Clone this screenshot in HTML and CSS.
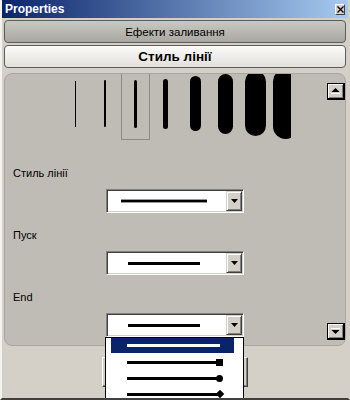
FILE: index.html
```html
<!DOCTYPE html>
<html>
<head>
<meta charset="utf-8">
<link rel="stylesheet" href="styles.css">
</head>
<body>
<div class="window">
  <div class="titlebar">
    <span class="title">Properties</span>
    <span class="close"><svg width="7" height="7" viewBox="0 0 7 7"><path d="M0.5 0.5 L6.5 6.5 M6.5 0.5 L0.5 6.5" stroke="#000" stroke-width="1.3"/></svg></span>
  </div>
  <div class="tabs">
    <div class="tab tab-fill">Ефекти заливання</div>
    <div class="tab tab-active">Стиль лінії</div>
  </div>
  <div class="panel">
    <div class="panel-main">
      <div class="strip">
        <div class="cell"><div class="bar w1"></div></div>
        <div class="cell"><div class="bar w2"></div></div>
        <div class="cell selected"><div class="bar w3"></div></div>
        <div class="cell"><div class="bar w5"></div></div>
        <div class="cell"><div class="bar w10"></div></div>
        <div class="cell"><div class="bar w15"></div></div>
        <div class="cell"><div class="bar w20"></div></div>
        <div class="cell"><div class="bar w25"></div></div>
      </div>
      <div class="field">
        <div class="label">Стиль лінії</div>
        <div class="combo">
          <div class="combo-value"><span class="line line-long"></span></div>
          <div class="combo-btn"><svg width="7" height="4" viewBox="0 0 7 4"><path d="M0 0 H7 L3.5 4 Z" fill="#000"/></svg></div>
        </div>
      </div>
      <div class="field">
        <div class="label">Пуск</div>
        <div class="combo">
          <div class="combo-value"><span class="line line-short"></span></div>
          <div class="combo-btn"><svg width="7" height="4" viewBox="0 0 7 4"><path d="M0 0 H7 L3.5 4 Z" fill="#000"/></svg></div>
        </div>
      </div>
      <div class="field">
        <div class="label">End</div>
        <div class="combo">
          <div class="combo-value"><span class="line line-short"></span></div>
          <div class="combo-btn"><svg width="7" height="4" viewBox="0 0 7 4"><path d="M0 0 H7 L3.5 4 Z" fill="#000"/></svg></div>
        </div>
      </div>
    </div>
    <div class="scroll-col">
      <div class="sbtn"><svg width="9" height="6" viewBox="0 0 9 6"><path d="M0.5 4 H8.5 L4.5 0 Z" fill="#000"/><path d="M0 5.5 H9" stroke="#fff"/></svg></div>
      <div class="sbtn"><svg width="9" height="6" viewBox="0 0 9 6"><path d="M0 0.5 H9" stroke="#fff"/><path d="M0.5 2 H8.5 L4.5 6 Z" fill="#000"/></svg></div>
    </div>
  </div>
  <div class="footer">
    <div class="footer-btn"></div>
  </div>
  <div class="dropdown">
    <div class="item active"><span class="dline"></span></div>
    <div class="item"><span class="dline"></span><span class="end square"></span></div>
    <div class="item"><span class="dline"></span><span class="end circle"></span></div>
    <div class="item"><span class="dline"></span><span class="end diamond"></span></div>
  </div>
</div>
</body>
</html>
```

FILE: styles.css
```css
* { box-sizing: border-box; }
html, body { margin: 0; padding: 0; }
body { background: #d4d0c8; font-family: "Liberation Sans", Arial, sans-serif; }

.window {
  position: relative;
  width: 350px;
  height: 400px;
  background: #d4d0c8;
  border-left: 2px solid #f4f3ef;
  border-right: 2px solid #d4d0c8;
  border-bottom: 2px solid #404040;
  overflow: hidden;
  display: flex;
  flex-direction: column;
}

.titlebar {
  height: 18px;
  background: linear-gradient(to right, #0a246a, #a6caf0);
  display: flex;
  align-items: center;
  justify-content: space-between;
  padding: 0 3px 0 3px;
  flex-shrink: 0;
}
.title {
  color: #fff;
  font-weight: bold;
  font-size: 12px;
}
.close {
  width: 10px;
  height: 11px;
  background: #d4d0c8;
  border-top: 1px solid #fff;
  border-left: 1px solid #fff;
  border-right: 1px solid #404040;
  border-bottom: 1px solid #404040;
  display: flex;
  align-items: center;
  justify-content: center;
  margin-top: 1px;
}

.tabs {
  padding: 2px 2px 0;
  display: flex;
  flex-direction: column;
  gap: 2px;
  flex-shrink: 0;
}
.tab {
  height: 23px;
  border: 1px solid #5c5c5c;
  border-radius: 4px;
  display: flex;
  align-items: center;
  justify-content: center;
  color: #000;
}
.tab-fill {
  background: linear-gradient(to bottom, #cac8c2, #a9a7a1);
  font-size: 11.5px;
}
.tab-active {
  background: linear-gradient(to bottom, #fbfbfa, #e2e0da);
  font-size: 13.5px;
  font-weight: bold;
}

.panel {
  margin: 5px 2px 0;
  height: 273px;
  background: #bfbcb5;
  border: 1px solid #a9a69f;
  border-radius: 8px;
  display: flex;
  flex-shrink: 0;
}
.panel-main {
  flex: 1;
  display: flex;
  flex-direction: column;
}

.strip {
  margin-left: 55px;
  margin-bottom: 27px;
  width: 231px;
  height: 66px;
  display: flex;
  align-items: flex-end;
  overflow: hidden;
  flex-shrink: 0;
}
.cell {
  width: 30px;
  height: 73px;
  flex-shrink: 0;
  display: flex;
  align-items: center;
  justify-content: center;
}
.cell.selected {
  border: 1px solid #8c8a85;
  width: 29px;
  margin-left: 1px;
}
.bar { background: #000; flex-shrink: 0; }
.w1 { width: 1px; height: 46px; }
.w2 { width: 2px; height: 47px; border-radius: 1px; }
.w3 { width: 3px; height: 48px; border-radius: 1.5px; }
.w5 { width: 5px; height: 50px; border-radius: 2.5px; }
.w10 { width: 11px; height: 55px; border-radius: 5.5px; }
.w15 { width: 15px; height: 60px; border-radius: 7.5px; }
.w20 { width: 21px; height: 65px; border-radius: 10.5px; }
.w25 { width: 25px; height: 70px; border-radius: 12.5px; }

.field {
  padding-left: 8px;
  display: flex;
  flex-direction: column;
}
.field + .field { margin-top: 16px; }
.label {
  font-size: 11px;
  line-height: 13px;
  height: 13px;
  color: #000;
}
.combo {
  margin-top: 9px;
  margin-left: 93px;
  width: 138px;
  height: 24px;
  background: #fff;
  border-top: 1px solid #808080;
  border-left: 1px solid #808080;
  border-right: 1px solid #fff;
  border-bottom: 1px solid #fff;
  box-shadow: inset 1px 1px 0 #404040, inset -1px -1px 0 #d4d0c8;
  padding: 1px;
  display: flex;
}
.combo-value {
  flex: 1;
  display: flex;
  align-items: center;
}
.line { display: block; background: #000; }
.line-long { margin-left: 13px; width: 86px; height: 2px; box-shadow: 0 -1px 0 #9a9a9a, 0 1px 0 #9a9a9a; }
.line-short { margin-left: 20px; width: 72px; height: 3px; }
.combo-btn {
  width: 16px;
  height: 20px;
  background: #d4d0c8;
  border-top: 1px solid #d4d0c8;
  border-left: 1px solid #d4d0c8;
  border-right: 1px solid #404040;
  border-bottom: 1px solid #404040;
  box-shadow: inset 1px 1px 0 #fff, inset -1px -1px 0 #808080;
  display: flex;
  align-items: center;
  justify-content: center;
}

.scroll-col {
  width: 18px;
  padding: 9px 0 5px;
  display: flex;
  flex-direction: column;
  justify-content: space-between;
}
.sbtn {
  width: 18px;
  height: 17px;
  background: #d4d0c8;
  border: 1px solid #000;
  border-right-width: 2px;
  border-bottom-width: 2px;
  box-shadow: inset 1px 1px 0 #fff, inset -1px -1px 0 #808080;
  display: flex;
  align-items: center;
  justify-content: center;
}

.footer {
  flex: 1;
  padding: 11px 0 0 100px;
}
.footer-btn {
  width: 146px;
  height: 30px;
  background: #d4d0c8;
  border-top: 1px solid #fff;
  border-left: 1px solid #fff;
  border-right: 1px solid #404040;
  border-bottom: 1px solid #404040;
  box-shadow: inset -1px -1px 0 #808080;
}

.dropdown {
  position: absolute;
  left: 103px;
  top: 337px;
  width: 139px;
  height: 80px;
  background: #fff;
  border: 1px solid #000;
  padding-left: 5px;
}
.item {
  width: 123px;
  height: 16px;
  display: flex;
  align-items: center;
  padding-left: 16px;
}
.item.active { background: #0a246a; height: 15px; margin-bottom: 1px; }
.dline { display: block; width: 93px; height: 3px; background: #000; }
.item.active .dline { background: #fff; }
.end { display: block; background: #000; margin-left: -4px; }
.square { width: 7px; height: 7px; }
.circle { width: 7px; height: 7px; border-radius: 50%; }
.diamond { width: 6px; height: 6px; transform: rotate(45deg); margin-left: -3px; }
```
